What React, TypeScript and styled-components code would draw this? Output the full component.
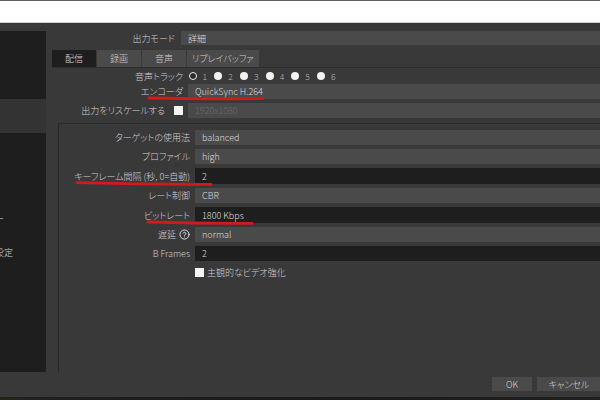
import React from 'react';
import styled, { createGlobalStyle } from 'styled-components';

const GlobalStyle = createGlobalStyle`
  html, body {
    margin: 0;
    padding: 0;
    width: 600px;
    height: 400px;
    overflow: hidden;
    background: #1c1c1c;
  }
  body {
    font-family: "Noto Sans CJK JP", "Noto Sans", sans-serif;
    font-size: 9px;
    font-weight: 300;
    font-feature-settings: "palt";
    color: #d0d0d0;
  }
  * { box-sizing: border-box; }
`;

const Screen = styled.div`
  position: relative;
  width: 600px;
  height: 400px;
  display: flex;
  flex-direction: column;
  overflow: hidden;
`;

const TitleBar = styled.div`
  flex: none;
  height: 23px;
  background: #ffffff;
  border-top: 1px solid #5e5e5e;
  border-bottom: 1px solid #cdcdcd;
`;

const Dialog = styled.div`
  flex: none;
  height: 374px;
  background: #3a393a;
  display: flex;
  flex-direction: column;
  padding-top: 8px;
`;

const Taskbar = styled.div`
  flex: 1;
  background: linear-gradient(90deg, #23241c 0%, #1d1d1b 20%, #1a1a1a 60%, #202020 100%);
`;

const Columns = styled.div`
  flex: none;
  height: 341px;
  display: flex;
`;

const Nav = styled.div`
  flex: none;
  width: 46px;
  margin-right: 6px;
  background: #1f1e1f;
  overflow: hidden;
  display: flex;
  flex-direction: column;
`;

const NavItem = styled.div<{ $tail: number; $selected?: boolean }>`
  flex: none;
  width: 46px;
  height: 34px;
  display: flex;
  align-items: center;
  justify-content: flex-end;
  padding-right: ${(p) => p.$tail}px;
  white-space: nowrap;
  background: ${(p) => (p.$selected ? '#333333' : 'transparent')};
  color: #d4d4d4;
`;

const Main = styled.div`
  flex: 1;
  display: flex;
  flex-direction: column;
  margin-right: -20px;
`;

const FormRow = styled.div<{ $label: number; $gap: number; $h: number; $mt?: number }>`
  flex: none;
  display: grid;
  grid-template-columns: ${(p) => p.$label}px 1fr;
  column-gap: ${(p) => p.$gap}px;
  height: ${(p) => p.$h}px;
  margin-top: ${(p) => p.$mt ?? 0}px;
`;

const Label = styled.div`
  display: flex;
  align-items: center;
  justify-content: flex-end;
  gap: 3px;
  white-space: nowrap;
  color: #d0d0d0;
`;

const Field = styled.div<{ $edit?: boolean; $disabled?: boolean }>`
  display: flex;
  align-items: center;
  padding-left: 7px;
  white-space: nowrap;
  background: ${(p) => (p.$edit ? '#1f1e1f' : '#4a4a4a')};
  color: ${(p) => (p.$disabled ? '#6a6a6a' : '#dedede')};
`;

const Tabs = styled.div`
  flex: none;
  display: flex;
  gap: 1px;
  height: 17px;
  margin-top: 5px;
`;

const Tab = styled.div<{ $active?: boolean }>`
  min-width: 44px;
  padding: 0 5px;
  display: flex;
  align-items: center;
  justify-content: center;
  background: ${(p) => (p.$active ? '#1f1e1f' : '#4a4a4a')};
  color: ${(p) => (p.$active ? '#dcdcdc' : '#cccccc')};
`;

const TabPane = styled.div`
  flex: 1;
  display: flex;
  flex-direction: column;
  border-top: 1px solid #2f2e2f;
`;

const Tracks = styled.div`
  display: flex;
  align-items: center;
  padding-left: 0.6px;
`;

const Track = styled.div`
  width: 25.7px;
  display: flex;
  align-items: center;
  gap: 6px;
  color: #b8b8b8;
  font-size: 8.5px;
`;

const Radio = styled.span<{ $ring?: boolean }>`
  width: 8px;
  height: 8px;
  border-radius: 50%;
  background: ${(p) => (p.$ring ? '#2a292a' : '#f2f2f2')};
  border: ${(p) => (p.$ring ? '1.6px solid #f0f0f0' : 'none')};
  flex: none;
`;

const CheckBox = styled.span`
  width: 9px;
  height: 9px;
  background: #f4f4f4;
  flex: none;
`;

const GroupBox = styled.div`
  flex: 1;
  margin-top: 5px;
  margin-left: 6px;
  border-top: 1px solid #2c2b2c;
  border-left: 1px solid #2a292a;
  padding-top: 6px;
  display: flex;
  flex-direction: column;
`;

const CheckRow = styled.div`
  display: flex;
  align-items: center;
  gap: 3px;
  height: 12px;
  color: #d0d0d0;
`;

const Footer = styled.div`
  flex: none;
  display: flex;
  justify-content: flex-end;
  gap: 5px;
  padding: 5px 0 6px;
  margin-right: -1px;
`;

const Button = styled.div<{ $w: number }>`
  width: ${(p) => p.$w}px;
  height: 14px;
  background: #4a4a4a;
  color: #d8d8d8;
  display: flex;
  align-items: center;
  justify-content: center;
`;

const Spacer = styled.span`
  width: 3px;
`;

const Marks = styled.svg`
  position: absolute;
  left: 0;
  top: 0;
  width: 600px;
  height: 400px;
  pointer-events: none;
`;

const HelpIcon = () => (
  <svg width="11" height="11" viewBox="0 0 24 24" fill="none" stroke="#e8e8e8" strokeWidth="2" strokeLinecap="round" strokeLinejoin="round">
    <circle cx="12" cy="12" r="10" />
    <path d="M9.1 9a3 3 0 0 1 5.8 1c0 2-3 2.6-3 4" />
    <path d="M12 17.6h.01" />
  </svg>
);

const navItems = [
  { t: '一般', tail: 60 },
  { t: '配信', tail: 60 },
  { t: '出力', tail: 60, sel: true },
  { t: '音声', tail: 60 },
  { t: '映像', tail: 60 },
  { t: 'ホットキー', tail: 42 },
  { t: '詳細設定', tail: 33 },
];

const groupRows: { label: React.ReactNode; value: string; edit?: boolean; h: number }[] = [
  { label: 'ターゲットの使用法', value: 'balanced', h: 15 },
  { label: 'プロファイル', value: 'high', h: 15 },
  { label: 'キーフレーム間隔 (秒, 0=自動)', value: '2', edit: true, h: 16 },
  { label: 'レート制御', value: 'CBR', h: 15 },
  { label: 'ビットレート', value: '1800 Kbps', edit: true, h: 16 },
  {
    label: (
      <>
        遅延 <HelpIcon />
      </>
    ),
    value: 'normal',
    h: 15,
  },
  { label: 'B Frames', value: '2', edit: true, h: 15 },
];

export default function App() {
  return (
    <Screen>
      <GlobalStyle />
      <TitleBar />
      <Dialog>
        <Columns>
          <Nav>
            {navItems.map((n) => (
              <NavItem key={n.t} $tail={n.tail} $selected={n.sel}>
                {n.t}
              </NavItem>
            ))}
          </Nav>
          <Main>
            <FormRow $label={123} $gap={6} $h={14}>
              <Label>出力モード</Label>
              <Field>詳細</Field>
            </FormRow>
            <Tabs>
              <Tab $active>配信</Tab>
              <Tab>録画</Tab>
              <Tab>音声</Tab>
              <Tab>リプレイバッファ</Tab>
            </Tabs>
            <TabPane>
              <FormRow $label={131} $gap={5} $h={16}>
                <Label>音声トラック</Label>
                <Tracks>
                  {[1, 2, 3, 4, 5, 6].map((n) => (
                    <Track key={n}>
                      <Radio $ring={n === 1} />
                      {n}
                    </Track>
                  ))}
                </Tracks>
              </FormRow>
              <FormRow $label={131} $gap={5} $h={15}>
                <Label>エンコーダ</Label>
                <Field>QuickSync H.264</Field>
              </FormRow>
              <FormRow $label={131} $gap={5} $h={15} $mt={4}>
                <Label>
                  出力をリスケールする
                  <Spacer />
                  <CheckBox />
                </Label>
                <Field $disabled>1920x1080</Field>
              </FormRow>
              <GroupBox>
                {groupRows.map((r, i) => (
                  <FormRow key={i} $label={131} $gap={5} $h={r.h} $mt={i === 0 ? 0 : 4}>
                    <Label>{r.label}</Label>
                    <Field $edit={r.edit}>{r.value}</Field>
                  </FormRow>
                ))}
                <FormRow $label={131} $gap={5} $h={12} $mt={5}>
                  <span />
                  <CheckRow>
                    <CheckBox />
                    主観的なビデオ強化
                  </CheckRow>
                </FormRow>
              </GroupBox>
            </TabPane>
          </Main>
        </Columns>
        <Footer>
          <Button $w={40}>OK</Button>
          <Button $w={64}>キャンセル</Button>
        </Footer>
      </Dialog>
      <Taskbar />
      <Marks viewBox="0 0 600 400">
        <g stroke="#d2191c" strokeWidth="2.8" strokeLinecap="round" fill="none">
          <path d="M149 98 Q206 99.4 263 98.4" />
          <path d="M77 182.6 Q144 184.6 211 184.4" />
          <path d="M148 222 Q200 223.6 252 223.4" />
        </g>
      </Marks>
    </Screen>
  );
}
